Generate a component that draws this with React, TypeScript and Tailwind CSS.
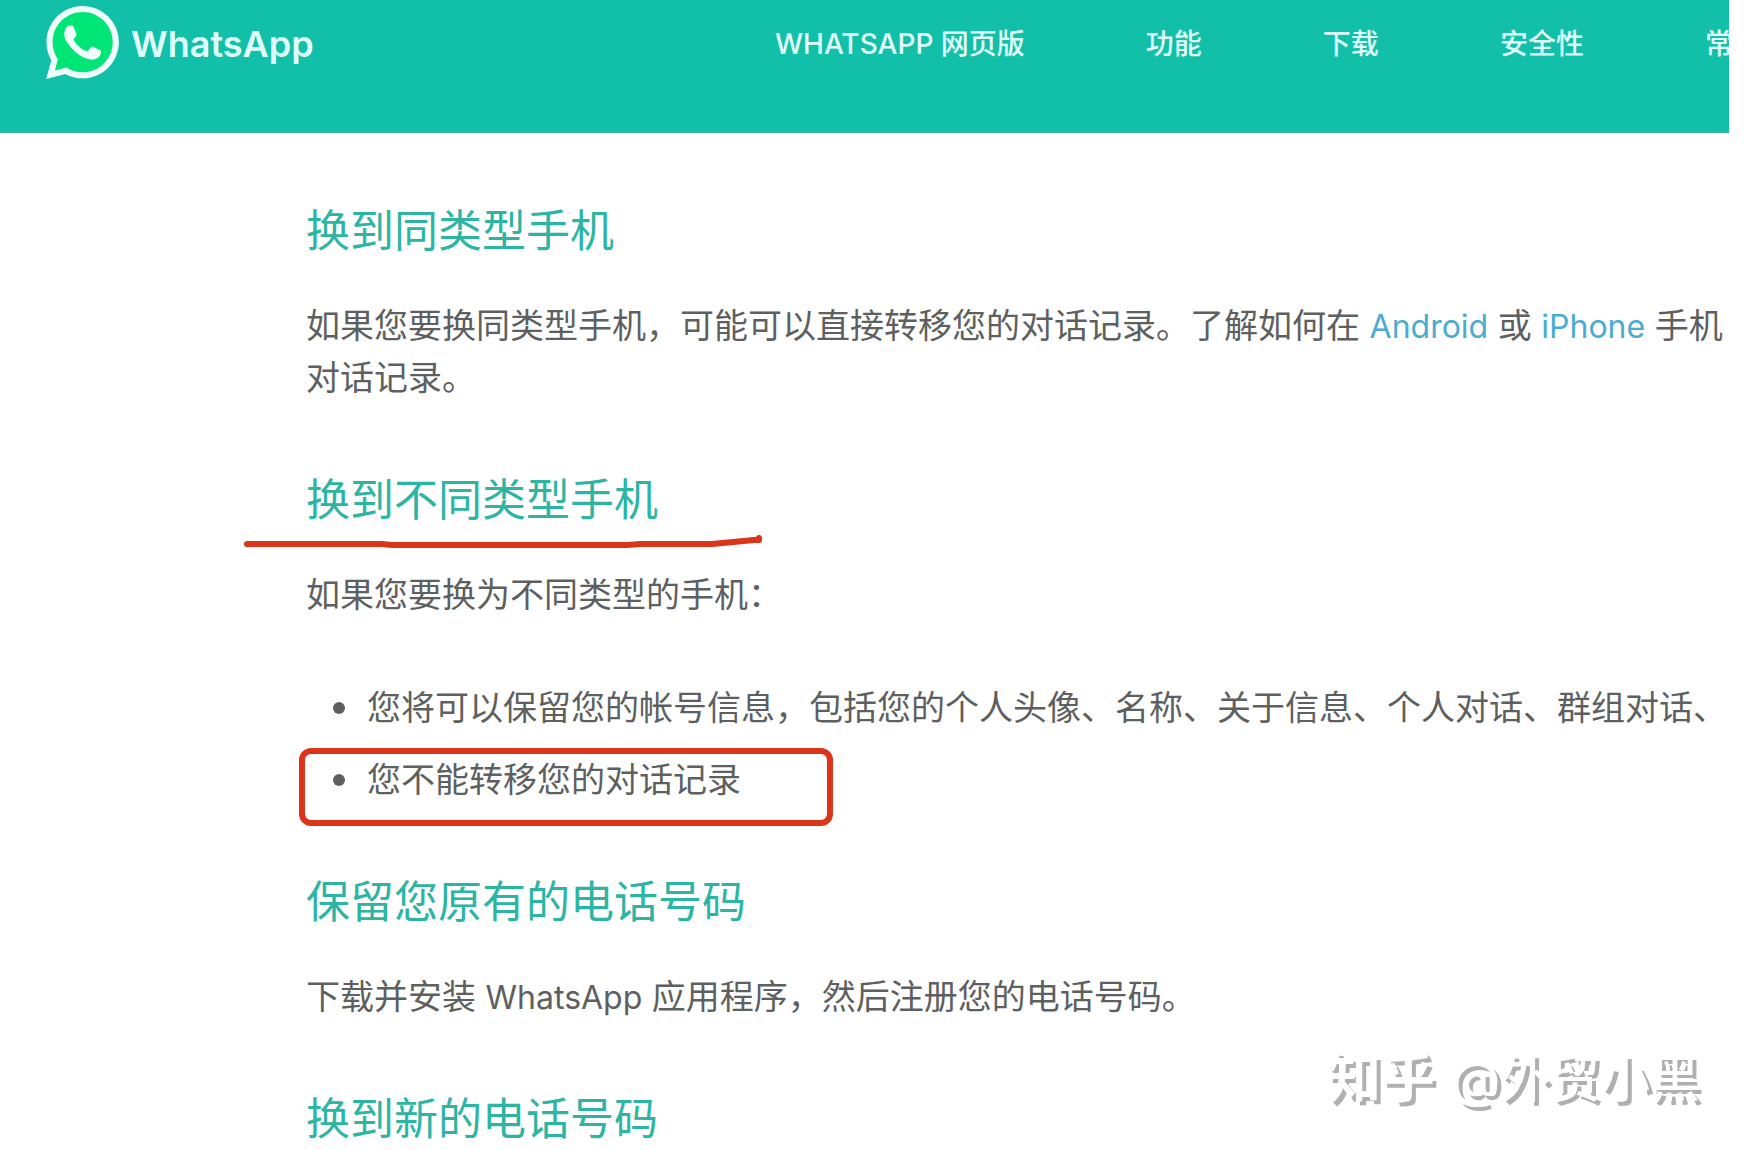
import React from 'react';

const navItems = ['WhatsApp 网页版', '功能', '下载', '安全性', '常'];

function WhatsAppLogo() {
  return (
    <svg viewBox="0 0 24 24" className="h-[73px] w-[73px] shrink-0" aria-hidden="true">
      <path
        fill="#f0fffd"
        d="M.057 24l1.687-6.163a11.867 11.867 0 01-1.587-5.946C.16 5.335 5.495 0 12.05 0a11.817 11.817 0 018.413 3.488 11.824 11.824 0 013.48 8.414c-.003 6.557-5.338 11.892-11.893 11.892a11.9 11.9 0 01-5.688-1.448L.057 24z"
      />
      <path
        fill="#00e676"
        d="M6.654 20.193c1.676.995 3.276 1.591 5.392 1.592 5.448 0 9.886-4.434 9.889-9.885.002-5.462-4.415-9.89-9.881-9.892-5.452 0-9.887 4.434-9.889 9.884-.001 2.225.651 3.891 1.746 5.634l-.999 3.648 3.742-.981z"
      />
      <path
        fill="#f0fffd"
        d="M17.472 14.382c-.297-.149-1.758-.867-2.03-.967-.273-.099-.471-.148-.67.15-.197.297-.767.966-.94 1.164-.173.199-.347.223-.644.075-.297-.15-1.255-.463-2.39-1.475-.883-.788-1.48-1.761-1.653-2.059-.173-.297-.018-.458.13-.606.134-.133.298-.347.446-.52.149-.174.198-.298.298-.497.099-.198.05-.371-.025-.52-.075-.149-.669-1.612-.916-2.207-.242-.579-.487-.5-.669-.51-.173-.008-.371-.01-.57-.01-.198 0-.52.074-.792.372-.272.297-1.04 1.016-1.04 2.479 0 1.462 1.065 2.875 1.213 3.074.149.198 2.096 3.2 5.077 4.487.709.306 1.262.489 1.694.625.712.227 1.36.195 1.871.118.571-.085 1.758-.719 2.006-1.413.248-.694.248-1.289.173-1.413-.074-.124-.272-.198-.57-.347z"
      />
    </svg>
  );
}

function Header() {
  return (
    <header className="flex h-[133px] items-start overflow-hidden border-b border-[#3fae9f] bg-[#12bfa8] pl-[46px] pt-[6px] text-[#e0fffb]">
      <a href="#" className="flex w-[729px] shrink-0 items-start gap-3">
        <WhatsAppLogo />
        <span className="text-[36px] font-semibold leading-[76px]">WhatsApp</span>
      </a>
      <nav className="flex shrink-0 gap-[121px] whitespace-nowrap text-[28px] font-medium uppercase leading-[76px]">
        {navItems.map(item => (
          <a key={item} href="#">{item}</a>
        ))}
      </nav>
    </header>
  );
}

function Section({ title, underlined, children }: { title: string; underlined?: boolean; children?: React.ReactNode }) {
  return (
    <section>
      <h2 className="relative text-[44px] leading-[56px] text-[#2db5a3]">
        {title}
        {/* hand-drawn marker line */}
        {underlined && (
          <svg viewBox="0 0 524 20" className="absolute -left-16 top-[60px] h-5 w-[524px]" fill="none" aria-hidden="true">
            <path
              d="M5 12H140L150 13H385L398 12H470L512 8L517 8L517 6"
              stroke="#dc3418"
              strokeWidth="6"
              strokeLinecap="round"
              strokeLinejoin="round"
            />
          </svg>
        )}
      </h2>
      {children}
    </section>
  );
}

function Bullet({ children, boxed }: { children: React.ReactNode; boxed?: boolean }) {
  return (
    <li className="relative flex items-center gap-[22px] pl-[27px]">
      <span className="h-3 w-3 rounded-full bg-[#5e5f60]" />
      {children}
      {boxed && (
        <span className="absolute -left-[7px] -top-[6px] h-[78px] w-[534px] rounded-xl border-[6px] border-[#dc3418]" />
      )}
    </li>
  );
}

export default function App() {
  return (
    <div className="relative min-h-screen overflow-hidden bg-white pr-[18px] font-[Inter,'Noto_Sans_CJK_SC',sans-serif]">
      <Header />
      <main className="flex flex-col gap-[68px] overflow-hidden whitespace-nowrap pl-[306px] pt-[70px] text-[34px] leading-[52px] text-[#5e5f60]">
        <Section title="换到同类型手机">
          <p className="mt-[41px]">
            如果您要换同类型手机，可能可以直接转移您的对话记录。了解如何在{' '}
            <a href="#" className="text-[32px] leading-none text-[#4bacd0]">Android</a> 或{' '}
            <a href="#" className="text-[32px] leading-none text-[#4bacd0]">iPhone</a> 手机
            <br />
            对话记录。
          </p>
        </Section>
        <Section title="换到不同类型手机" underlined>
          <p className="mt-[41px]">如果您要换为不同类型的手机：</p>
          <ul className="mt-[61px] flex flex-col gap-5">
            <Bullet>您将可以保留您的帐号信息，包括您的个人头像、名称、关于信息、个人对话、群组对话、</Bullet>
            <Bullet boxed>您不能转移您的对话记录</Bullet>
          </ul>
        </Section>
        <Section title="保留您原有的电话号码">
          <p className="mt-[41px]">
            下载并安装 <span className="text-[32px] leading-none">WhatsApp</span> 应用程序，然后注册您的电话号码。
          </p>
        </Section>
        <Section title="换到新的电话号码" />
      </main>
      <div className="absolute bottom-[35px] right-[47px] flex items-center gap-4 whitespace-nowrap text-[50px] leading-[72px] text-white [text-shadow:4px_4px_0_#b0b0b0]">
        <span className="text-[54px] font-bold">知乎</span>
        <span className="font-medium">@外贸小黑</span>
      </div>
    </div>
  );
}
